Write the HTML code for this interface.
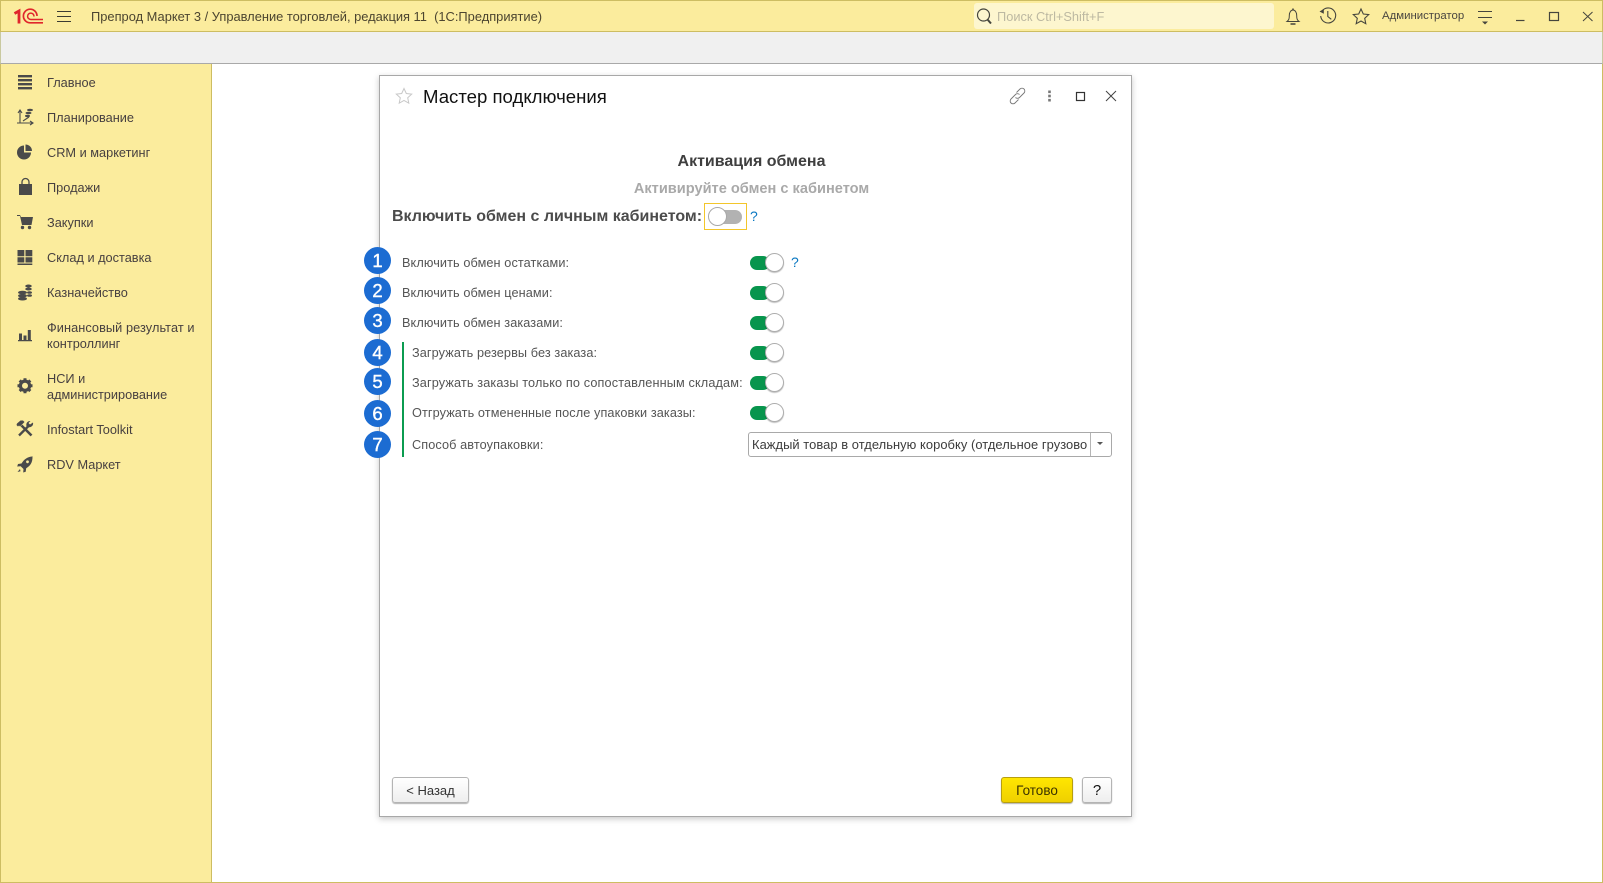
<!DOCTYPE html>
<html lang="ru"><head><meta charset="utf-8"><title>Мастер подключения</title>
<style>
html,body{margin:0;padding:0;background:#fff}
#p{position:relative;width:1603px;height:883px;overflow:hidden;background:#fff;font-family:"Liberation Sans",Arial,sans-serif;font-size:13px;color:#4b4b4b}
#p div{position:absolute;box-sizing:border-box}
.t{white-space:nowrap;line-height:16px;height:16px}
.n{left:47px;color:#474040;font-size:12.75px}
.l{color:#555;font-size:12.7px;letter-spacing:.1px}
.c{left:364px;width:27px;height:27px;border-radius:50%;background:#1c6cd2;color:#fff;text-align:center;font-size:18.5px;line-height:27px;-webkit-text-stroke:.4px #fff}
.tr{left:750px;width:20px;height:14px;border-radius:7px;background:#08954d}
.kn{left:764.500px;width:19px;height:19px;border-radius:50%;background:#fff;border:1px solid #aeaeae;box-shadow:0 1px 1px rgba(0,0,0,.25)}
.q{color:#0a78c2;font-size:14px;font-weight:400}
.b{border:1px solid #b4b4b4;border-radius:3px;background:linear-gradient(#fff,#eee);box-shadow:0 1px 1px rgba(0,0,0,.3);text-align:center;line-height:25px;color:#333;font-size:13px}
</style></head><body><div id="p">
<div style="left:0;top:0;width:1603px;height:32px;background:#fbec9d;border:1px solid #cdbd62"></div>
<div style="left:0;top:32px;width:1603px;height:32px;background:#f0f0f0;border-bottom:1px solid #a9a9a9;border-left:1px solid #c9c9a0;border-right:1px solid #c9c9a0"></div>
<div style="left:0;top:64px;width:212px;height:819px;background:#fbec9d;border-left:1px solid #cdbd62;border-right:1px solid #cdbd62;border-bottom:1px solid #cdbd62"></div>
<div style="left:212px;top:882px;width:1391px;height:1px;background:#cdbd62"></div>
<div style="left:1602px;top:64px;width:1px;height:819px;background:#cdbd62"></div>

<div class="t" style="left:91px;top:9px;font-size:12.88px;color:#4c4530">Препрод Маркет 3 / Управление торговлей, редакция 11&nbsp; (1С:Предприятие)</div>
<div style="left:974px;top:3px;width:300px;height:26px;background:#fdf6cf;border-radius:3px"></div>
<div class="t" style="left:997px;top:9px;font-size:12.8px;color:#bdb9a2">Поиск Ctrl+Shift+F</div>
<div class="t" style="left:1382px;top:8px;font-size:11.4px;color:#4a4640">Администратор</div>

<div class="t n" style="top:75px">Главное</div>
<div class="t n" style="top:110px">Планирование</div>
<div class="t n" style="top:145px">CRM и маркетинг</div>
<div class="t n" style="top:180px">Продажи</div>
<div class="t n" style="top:215px">Закупки</div>
<div class="t n" style="top:250px">Склад и доставка</div>
<div class="t n" style="top:285px">Казначейство</div>
<div class="t n" style="top:320px;letter-spacing:.07px">Финансовый результат и</div>
<div class="t n" style="top:336px">контроллинг</div>
<div class="t n" style="top:371px">НСИ и</div>
<div class="t n" style="top:387px">администрирование</div>
<div class="t n" style="top:422px">Infostart Toolkit</div>
<div class="t n" style="top:457px">RDV Маркет</div>

<div style="left:379px;top:75px;width:753px;height:742px;background:#fff;border:1px solid #a8a8a8;box-shadow:0 2px 6px rgba(0,0,0,.22)"></div>
<div class="t" style="left:423px;top:86px;height:22px;line-height:22px;font-size:18.6px;color:#111">Мастер подключения</div>
<div class="t" style="left:379px;width:745px;top:154px;text-align:center;font-weight:700;font-size:16px;color:#3f3f3f">Активация обмена</div>
<div class="t" style="left:379px;width:745px;top:181px;text-align:center;font-weight:700;font-size:14.6px;color:#a9a9a9">Активируйте обмен с кабинетом</div>
<div class="t" style="left:392px;top:209px;font-weight:700;font-size:16px;color:#4b4b4b">Включить обмен с личным кабинетом:</div>
<div style="left:704px;top:203px;width:43px;height:27px;border:1px solid #f3c62b"></div>
<div style="left:712px;top:210px;width:30px;height:14px;border-radius:7px;background:#b2b2b2"></div>
<div style="left:708px;top:207px;width:19px;height:19px;border-radius:50%;background:#fff;border:1px solid #a8a8a8"></div>
<div class="t q" style="left:750px;top:208px">?</div>

<div class="c" style="top:247px">1</div><div class="c" style="top:277px">2</div><div class="c" style="top:307px">3</div><div class="c" style="top:339px">4</div><div class="c" style="top:368px">5</div><div class="c" style="top:400px">6</div><div class="c" style="top:431px">7</div>

<div class="t l" style="left:402px;top:255px">Включить обмен остатками:</div>
<div class="t l" style="left:402px;top:285px">Включить обмен ценами:</div>
<div class="t l" style="left:402px;top:315px">Включить обмен заказами:</div>
<div style="left:402px;top:342px;width:2px;height:115px;background:#0b9c50"></div>
<div class="t l" style="left:412px;top:345px">Загружать резервы без заказа:</div>
<div class="t l" style="left:412px;top:375px;letter-spacing:.13px">Загружать заказы только по сопоставленным складам:</div>
<div class="t l" style="left:412px;top:405px">Отгружать отмененные после упаковки заказы:</div>
<div class="t l" style="left:412px;top:437px">Способ автоупаковки:</div>

<div class="tr" style="top:256px"></div><div class="kn" style="top:253px"></div>
<div class="tr" style="top:286px"></div><div class="kn" style="top:283px"></div>
<div class="tr" style="top:316px"></div><div class="kn" style="top:313px"></div>
<div class="tr" style="top:346px"></div><div class="kn" style="top:343px"></div>
<div class="tr" style="top:376px"></div><div class="kn" style="top:373px"></div>
<div class="tr" style="top:406px"></div><div class="kn" style="top:403px"></div>
<div class="t q" style="left:791px;top:254px">?</div>

<div style="left:748px;top:432px;width:364px;height:25px;border:1px solid #a9a9a9;border-radius:3px;background:#fff"></div>
<div style="left:1090px;top:433px;width:1px;height:23px;background:#b5b5b5"></div>
<div class="t" style="left:752px;top:437px;width:336px;overflow:hidden;font-size:12.9px;color:#3c3c3c;letter-spacing:.06px">Каждый товар в отдельную коробку (отдельное грузово</div>

<div class="b" style="left:392px;top:777px;width:77px;height:26px">&lt; Назад</div>
<div class="b" style="left:1001px;top:777px;width:72px;height:26px;background:linear-gradient(#ffe600,#efd000);border-color:#b79f10;color:#3a3200;font-size:13.5px">Готово</div>
<div class="b" style="left:1082px;top:777px;width:30px;height:26px;color:#111;font-size:15px">?</div>

<svg width="1603" height="883" viewBox="0 0 1603 883" style="position:absolute;left:0;top:0" fill="none">
<g stroke="#e0262c" fill="none">
<path d="M14.500 13.500l4.500-2.500v12.500" stroke-width="2.800"/>
<path d="M37 16a6.800 6.800 0 1 0-6.500 6.800h12.500" stroke-width="1.700"/>
<path d="M34 16.500a3.200 3.200 0 1 0-3.200 3h12.200" stroke-width="1.500"/>
</g>
<path d="M57 11.500h14M57 16.500h14M57 21.500h14" stroke="#3c3c32" stroke-width="1"/>
<circle cx="983.500" cy="15" r="6" stroke="#45453d" stroke-width="1.200"/><path d="M987.500 19.500l3.500 4" stroke="#45453d" stroke-width="2"/>
<path d="M1287 21.500c2-1.500 2.300-3 2.300-6 0-3 1.500-5.500 3.700-5.500s3.700 2.500 3.700 5.500c0 3 .3 4.500 2.300 6z" stroke="#45453d" stroke-width="1"/><path d="M1293 8.500v1.500M1290.500 24h5" stroke="#45453d" stroke-width="1.500"/>
<path d="M1322 11.200a7.500 7.500 0 1 1-1.300 4.800" stroke="#45453d" stroke-width="1.100"/><path d="M1319.500 11.500l4.300-2.500v4.800z" fill="#45453d"/><path d="M1327.800 11v5.500l3.500 2.800" stroke="#45453d" stroke-width="1.100"/>
<path d="M1361 9l2.300 5 5.400.6-4 3.700 1.100 5.400-4.800-2.700-4.800 2.700 1.100-5.400-4-3.700 5.400-.6z" stroke="#45453d" stroke-width="1.100"/>
<path d="M1478 11.500h14M1478 17.500h14" stroke="#45453d" stroke-width="1"/><path d="M1482 21.500h6l-3 3z" fill="#45453d"/>
<path d="M1516 20.500h8.500" stroke="#45453d" stroke-width="1.200"/>
<rect x="1549.500" y="12.500" width="9" height="8" stroke="#45453d" stroke-width="1.200"/>
<path d="M1583 12l9.500 9M1592.500 12l-9.500 9" stroke="#45453d" stroke-width="1"/>
<path d="M404 88.500l2.300 5 5.400.6-4 3.700 1.100 5.400-4.800-2.700-4.800 2.700 1.100-5.400-4-3.700 5.400-.6z" stroke="#c8c8c8" stroke-width="1"/>
<g stroke="#777" stroke-width=".9"><path d="M1016.500 92.500l3.500-3.500a2.800 2.800 0 0 1 4 4l-4.500 4.500a2.800 2.800 0 0 1-4 0"/><path d="M1018.500 99.500l-3.500 3.500a2.800 2.800 0 0 1-4-4l4.500-4.500a2.800 2.800 0 0 1 4 0"/></g>
<g fill="#777"><rect x="1048.200" y="90.500" width="2.600" height="2.600"/><rect x="1048.200" y="94.700" width="2.600" height="2.600"/><rect x="1048.200" y="98.900" width="2.600" height="2.600"/></g>
<rect x="1076.500" y="92.500" width="8" height="8" stroke="#333" stroke-width="1.200"/>
<path d="M1106 91l10 10M1116 91l-10 10" stroke="#444" stroke-width="1"/>
<path d="M1097 442h6l-3 3z" fill="#555"/>
<g fill="#4a4a4a">
<rect x="18" y="75" width="14" height="2.400"/><rect x="18" y="79" width="14" height="2.400"/><rect x="18" y="83" width="14" height="2.400"/><rect x="18" y="87" width="14" height="2.400"/>
<path d="M24 152.500v-7a7 7 0 1 0 7 7z"/><path d="M25.500 144.500a6.500 6.500 0 0 1 6.500 6.500h-6.500z"/>
<path d="M19 184h13v11H19z"/>
<path d="M17 215h3l1 2h12l-1.500 8H22l-2-9h-3z"/><circle cx="22.500" cy="227.500" r="1.700"/><circle cx="29.500" cy="227.500" r="1.700"/>
<path d="M17.500 250h6.800v6.200h-6.800zM25.500 250h6.800v6.200h-6.800zM17.500 257.300h6.800v5.200h-6.800zM25.500 257.300h6.800v5.200h-6.800zM17.500 263.500h14.800v1.500H17.500z"/>
<ellipse cx="22.500" cy="292.500" rx="4.500" ry="1.800"/><ellipse cx="22.500" cy="295.700" rx="4.500" ry="1.800"/><ellipse cx="22.500" cy="298.700" rx="4.500" ry="1.800"/>
<ellipse cx="28.500" cy="286" rx="3.300" ry="1.500"/><ellipse cx="28.500" cy="289" rx="3.300" ry="1.500"/><ellipse cx="29.500" cy="292.500" rx="2.500" ry="1.300"/><ellipse cx="29.500" cy="295.500" rx="2.500" ry="1.300"/>
<path d="M19 333.500h3v6.500h-3zM23.500 335.500h3v4.500h-3zM27.800 330h3v10h-3zM18 340h14v1.200H18z"/>
</g>
<g transform="translate(25 385.700)"><circle r="4.600" stroke="#4a4a4a" stroke-width="3.200"/><path d="M-1.500-7.500h3v3h-3zM-1.500 4.500h3v3h-3zM-7.500-1.500h3v3h-3zM4.500-1.500h3v3h-3z" fill="#4a4a4a"/><path d="M-1.500-7.500h3v3h-3zM-1.500 4.500h3v3h-3zM-7.500-1.500h3v3h-3zM4.500-1.500h3v3h-3z" fill="#4a4a4a" transform="rotate(45)"/></g>
<path d="M20 111v12h12M18 113l2-3 2 3M30 121l3 2-3 2M17 123h3M23 121l6-4" stroke="#4a4a4a" stroke-width="1.100"/>
<g fill="#4a4a4a"><ellipse cx="30" cy="110" rx="3" ry="1.300"/><ellipse cx="28.500" cy="113" rx="3" ry="1.300"/><ellipse cx="27.500" cy="116" rx="2.500" ry="1.200"/></g>
<path d="M22 184v-2a3.500 3.500 0 0 1 7 0v2" stroke="#4a4a4a" stroke-width="1.300"/>
<path d="M21.500 425.500l10 10" stroke="#4a4a4a" stroke-width="2.600"/>
<path d="M28.500 426l-9.500 9.500" stroke="#4a4a4a" stroke-width="2.300"/>
<path d="M17 423.500l3.500-3h2.500l1.500 1.500-4.500 4.500-1-1-1 1-1.500-1.500z" fill="#4a4a4a"/>
<path d="M33 422.500a3.800 3.800 0 0 1-5 4.500l-1.500-1a3.800 3.800 0 0 1 4-5l-2 2 1.500 1.500z" fill="#4a4a4a"/>
<path d="M32 456.500c-5 .5-8 3-10.500 7l-3.500.5-.8 2.500 3.500-.3 2.800 2.800-.3 3.500 2.500-.8.5-3.500c4-2.500 6.500-5.500 6.300-12z" fill="#4a4a4a"/><circle cx="27.500" cy="461.800" r="1.400" fill="#fbec9d"/><path d="M20 469l-2.500 3 3-.8z" fill="#4a4a4a"/>
</svg>
</div></body></html>
